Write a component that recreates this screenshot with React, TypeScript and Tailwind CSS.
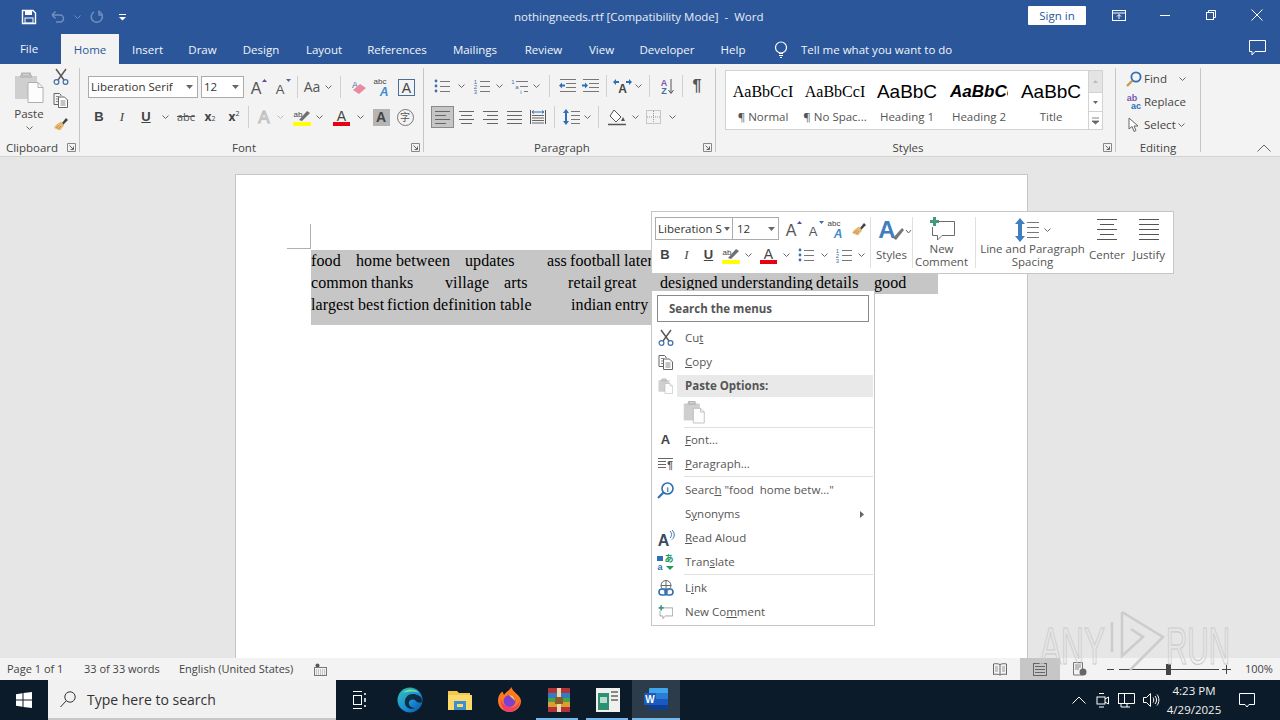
import React from "react";

type P = { children?: React.ReactNode; className?: string };

const S = ({ w, h, children }: { w: number; h: number; children?: React.ReactNode }) => (
  <svg width={w} height={h} viewBox={`0 0 ${w} ${h}`} className="block shrink-0 overflow-visible" fill="none">
    {children}
  </svg>
);

const Cell = ({ children, className = "" }: P) => (
  <div className={"flex items-center justify-center shrink-0 h-[22px] " + className}>{children}</div>
);

const Chev = ({ c = "#666" }: { c?: string }) => (
  <S w={7} h={4}>
    <path d="M0.5 0.5 L3.5 3.5 L6.5 0.5" stroke={c} />
  </S>
);

const Lines = ({ w, h, rows, c = "#666" }: { w: number; h: number; rows: number[][]; c?: string }) => (
  <S w={w} h={h}>
    {rows.map((r, i) => (
      <rect key={i} x={r[0]} y={r[2]} width={r[1] - r[0]} height={1} fill={c} />
    ))}
  </S>
);

const T = ({ x, y, s, c = "#444", b = false, i = false, f = "Liberation Sans", t }: { x: number; y: number; s: number; c?: string; b?: boolean; i?: boolean; f?: string; t: string }) => (
  <text x={x} y={y} fontSize={s} fill={c} fontFamily={f} fontWeight={b ? 700 : 400} fontStyle={i ? "italic" : "normal"} textAnchor="middle">
    {t}
  </text>
);

const Scissors = () => (
  <S w={16} h={16}>
    <path d="M3 0 L11 11 M13 0 L5 11" stroke="#555" strokeWidth="1.4" />
    <circle cx="3.5" cy="13" r="2.4" stroke="#3f6fa8" strokeWidth="1.2" />
    <circle cx="12.5" cy="13" r="2.4" stroke="#3f6fa8" strokeWidth="1.2" />
  </S>
);

const CopyI = () => (
  <S w={16} h={15}>
    <path d="M1 .5 H6.5 L8 2 V3 M1 .5 V11.5 H5" stroke="#666" />
    <path d="M5.5 4 H11.5 L14.5 7 V14.5 H5.5 Z" fill="#fff" stroke="#666" />
    <path d="M3 3.5H6M3 6H5M3 8.5H5M7.5 8H12.5M7.5 10H12.5M7.5 12H12.5" stroke="#888" />
  </S>
);

const Painter = () => (
  <S w={16} h={16}>
    <path d="M9 7 L13 2 L15 4 L10 9 Z" fill="#444" />
    <path d="M3 9 L8 5.5 L11 9.5 L7 14.5 L1 12 Z" fill="#e6b873" />
    <path d="M3 12 L6 9.5M5 13 L8 10" stroke="#c4924a" />
  </S>
);

const PasteI = ({ w = 30, h = 31 }: { w?: number; h?: number }) => (
  <svg width={w} height={h} viewBox="0 0 30 31" className="block shrink-0" fill="none">
    <rect x="1" y="4" width="22" height="23" fill="#cfcfcf" />
    <path d="M8 4 V1.5 H16 V4" stroke="#b5b5b5" strokeWidth="2" />
    <rect x="6" y="3" width="12" height="3" fill="#bcbcbc" />
    <path d="M14 10.5 H24 L29 15.5 V30.5 H14 Z" fill="#fdfdfd" stroke="#b0b0b0" />
    <path d="M24 10.5 V15.5 H29" stroke="#b0b0b0" />
  </svg>
);

const Grow = ({ up = true, big = true }: { up?: boolean; big?: boolean }) => (
  <S w={18} h={18}>
    <T x={7} y={16} s={big ? 16 : 13} c="#555" t="A" />
    {up ? <path d="M13 4 L15.5 1 L18 4 Z" fill="#5a4d9c" /> : <path d="M13 1 L15.5 4 L18 1 Z" fill="#3f6fa8" />}
  </S>
);

const Eraser = () => (
  <S w={17} h={17}>
    <T x={5} y={9} s={9} c="#3f6fa8" t="A" />
    <path d="M3 11 L10 5 L16 9 L9 15 Z" fill="#ea8aa0" />
  </S>
);

const AbcA = () => (
  <S w={18} h={18}>
    <T x={7} y={6} s={8} c="#444" t="abc" />
    <T x={11} y={18} s={12} c="#3f8bd0" b i t="A" />
  </S>
);

const BoxA = () => (
  <S w={17} h={17}>
    <rect x=".5" y=".5" width="16" height="16" stroke="#4a6e96" />
    <T x={8.5} y={14} s={14} c="#444" t="A" />
  </S>
);

const Highlight = () => (
  <S w={18} h={17}>
    <T x={5} y={8} s={8} c="#444" t="ab" />
    <path d="M6 11 L14 2 L17 4 L9 12 Z" fill="#6f6f6f" />
    <rect x="0" y="13" width="18" height="4" rx="1" fill="#ffff00" />
  </S>
);

const FontColor = () => (
  <S w={17} h={17}>
    <T x={8.5} y={12} s={14} c="#444" t="A" />
    <rect x="0" y="13" width="17" height="4" fill="#e60012" />
  </S>
);

const Bullets = () => (
  <S w={16} h={14}>
    <circle cx="2" cy="2" r="1.4" fill="#3f6fa8" />
    <circle cx="2" cy="7" r="1.4" fill="#3f6fa8" />
    <circle cx="2" cy="12" r="1.4" fill="#3f6fa8" />
    <path d="M6 2.5H16M6 7.5H16M6 12.5H16" stroke="#777" />
  </S>
);

const Numbers = () => (
  <S w={17} h={15}>
    <T x={2.5} y={5} s={6} c="#3f6fa8" t="1" />
    <T x={2.5} y={10} s={6} c="#3f6fa8" t="2" />
    <T x={2.5} y={15} s={6} c="#3f6fa8" t="3" />
    <path d="M7 2.5H17M7 7.5H17M7 12.5H17" stroke="#777" />
  </S>
);

const Multi = () => (
  <S w={17} h={15}>
    <T x={2} y={5} s={6} c="#3f6fa8" t="1" />
    <T x={6} y={10} s={6} c="#3f6fa8" t="a" />
    <T x={10} y={15} s={6} c="#3f6fa8" t="i" />
    <path d="M5 2.5H17M9 7.5H17M13 12.5H17" stroke="#777" />
  </S>
);

const Indent = ({ dir }: { dir: "in" | "out" }) => (
  <S w={17} h={14}>
    <path d="M1 .5H17M7 4.5H17M7 8.5H17M1 12.5H17" stroke="#777" />
    {dir === "out" ? <path d="M0 6.5 L3 3.5V5.5H6V7.5H3V9.5Z" fill="#2f6fb5" /> : <path d="M6 6.5 L3 3.5V5.5H0V7.5H3V9.5Z" fill="#2f6fb5" />}
  </S>
);

const AlignLeft = <Lines w={15} h={13} rows={[[0, 15, 0], [0, 11, 4], [0, 15, 8], [0, 11, 12]]} c="#666" />;
const AlignCenter = <Lines w={15} h={13} rows={[[0, 15, 0], [2, 13, 4], [0, 15, 8], [2, 13, 12]]} c="#666" />;
const AlignRight = <Lines w={15} h={13} rows={[[0, 15, 0], [4, 15, 4], [0, 15, 8], [4, 15, 12]]} c="#666" />;
const AlignJustify = <Lines w={15} h={13} rows={[[0, 15, 0], [0, 15, 4], [0, 15, 8], [0, 15, 12]]} c="#666" />;

const LineSpace = () => (
  <S w={17} h={16}>
    <path d="M3 0 L6 4 H4 V12 H6 L3 16 L0 12 H2 V4 H0 Z" fill="#2f6fb5" />
    <path d="M8 2.5H17M8 6.5H17M8 10.5H17M8 14.5H17" stroke="#777" />
  </S>
);

const CommentI = ({ w = 26, h = 25, c = "#6b6b6b" }: { w?: number; h?: number; c?: string }) => (
  <svg width={w} height={h} viewBox="0 0 26 25" className="block shrink-0" fill="none">
    <path d="M9 4.5 H25.5 V18.5 H13 L8.5 23 V18.5 H3.5 V10" stroke={c} />
    <path d="M4 0 H7 V3 H10 V6 H7 V9 H4 V6 H1 V3 H4 Z" fill="#3f9a80" />
  </svg>
);

const MagI = () => (
  <S w={16} h={16}>
    <circle cx="10" cy="6" r="4.6" stroke="#2f6fb5" strokeWidth="1.8" />
    <path d="M6.5 9.5 L1 15" stroke="#c89a4e" strokeWidth="2.4" />
  </S>
);

const GroupBox = ({ w, label, launcher = true, children }: { w: string; label: string; launcher?: boolean; children?: React.ReactNode }) => (
  <div className={"relative flex flex-col h-[84px] mt-1 border-r border-[#c6c6c6] shrink-0 " + w}>
    <div className="h-[72px] shrink-0">{children}</div>
    <div className={"h-[16px] shrink-0 flex items-center justify-center text-[#444] " + (launcher ? "pr-[15px]" : "")}>{label}</div>
    {launcher && (
      <div className="absolute right-[3px] bottom-0">
        <S w={9} h={9}>
          <path d="M.5 8.5V.5H8.5V8.5Z" stroke="#888" />
          <path d="M2.5 2.5L6.5 6.5M3.5 6.5H6.5V3.5" stroke="#666" />
        </S>
      </div>
    )}
  </div>
);

const Sep = ({ h = "h-[22px]" }: { h?: string }) => <div className={"w-px bg-[#d0d0d0] shrink-0 " + h} />;

const Clipboard = () => (
  <div className="flex">
    <div className="w-[50px] flex flex-col items-center pl-[8px] pt-[4px]">
      <PasteI />
      <div className="mt-[3px] leading-[16px]">Paste</div>
      <div className="mt-[4px]">
        <Chev />
      </div>
    </div>
    <div className="w-[22px] flex flex-col items-center pt-px gap-[8px]">
      <Scissors />
      <CopyI />
      <Painter />
    </div>
  </div>
);

const DropBox = ({ text, w, h = "h-[22px]" }: { text: string; w: string; h?: string }) => (
  <div className={"flex items-center justify-between bg-white border border-[#ababab] pl-[2px] pr-[4px] text-[#333] shrink-0 " + w + " " + h}>
    <span className="whitespace-nowrap overflow-hidden">{text}</span>
    <S w={7} h={4}>
      <path d="M0 0H7L3.5 4Z" fill="#666" />
    </S>
  </div>
);

const FontGroup = () => (
  <div className="flex flex-col pl-2 pt-2 gap-2">
    <div className="flex items-center">
      <DropBox text="Liberation Serif" w="w-[110px]" />
      <div className="w-[3px]" />
      <DropBox text="12" w="w-[43px]" />
      <Cell className="w-[24px] ml-[2px]"><Grow /></Cell>
      <Cell className="w-[24px]"><Grow up={false} big={false} /></Cell>
      <Cell className="w-[6px]"><Sep /></Cell>
      <Cell className="w-[20px] ml-[2px] text-[14px] text-[#555]">Aa</Cell>
      <Cell className="w-[12px]"><Chev /></Cell>
      <Cell className="w-[12px]"><Sep /></Cell>
      <Cell className="w-[24px]"><Eraser /></Cell>
      <Cell className="w-[24px]"><AbcA /></Cell>
      <Cell className="w-[24px]"><BoxA /></Cell>
    </div>
    <div className="flex items-center">
      <Cell className="w-[22px] font-bold text-[13px] text-[#444] font-['Liberation_Sans',sans-serif]">B</Cell>
      <Cell className="w-[24px] italic text-[13px] text-[#444] font-['Liberation_Serif',serif]">I</Cell>
      <Cell className="w-[24px] font-bold underline text-[13px] text-[#444] font-['Liberation_Sans',sans-serif]">U</Cell>
      <Cell className="w-[14px]"><Chev /></Cell>
      <Cell className="w-[28px] line-through text-[11px] text-[#555]">abc</Cell>
      <Cell className="w-[20px] font-bold text-[12px] text-[#444]">x<sub className="text-[7px] font-normal">2</sub></Cell>
      <Cell className="w-[28px] font-bold text-[12px] text-[#444]">x<sup className="text-[7px] font-normal">2</sup></Cell>
      <Cell className="w-[1px]"><Sep /></Cell>
      <Cell className="w-[30px]">
        <S w={16} h={16}><text x="8" y="14" fontSize="17" fontFamily="Liberation Sans" textAnchor="middle" fill="#f3f3f3" stroke="#bdbdbd">A</text></S>
      </Cell>
      <Cell className="w-[2px]"><Chev c="#bbb" /></Cell>
      <Cell className="w-[32px] ml-[5px]"><Highlight /></Cell>
      <Cell className="w-[2px]"><Chev /></Cell>
      <Cell className="w-[36px] ml-[3px]"><FontColor /></Cell>
      <Cell className="w-[2px]"><Chev /></Cell>
      <Cell className="w-[36px] ml-[2px]">
        <div className="w-[17px] h-[17px] bg-[#b5b5b5] flex items-center justify-center font-bold text-[14px] text-[#444] font-['Liberation_Sans',sans-serif]">A</div>
      </Cell>
      <Cell className="w-[10px] ml-px">
        <div className="w-[17px] h-[17px] rounded-full border border-[#777] flex items-center justify-center text-[10px] text-[#555] shrink-0 font-['Noto_Sans_CJK_SC',sans-serif]">字</div>
      </Cell>
    </div>
  </div>
);

const ParagraphGroup = () => (
  <div className="flex flex-col pt-[7px] pl-2 gap-[9px]">
    <div className="flex items-center">
      <Cell className="w-[20px]"><Bullets /></Cell>
      <Cell className="w-[19px]"><Chev /></Cell>
      <Cell className="w-[20px]"><Numbers /></Cell>
      <Cell className="w-[17px]"><Chev /></Cell>
      <Cell className="w-[22px]"><Multi /></Cell>
      <Cell className="w-[12px]"><Chev /></Cell>
      <Cell className="w-[14px]"><Sep /></Cell>
      <Cell className="w-[22px]"><Indent dir="out" /></Cell>
      <Cell className="w-[24px]"><Indent dir="in" /></Cell>
      <Cell className="w-[8px]"><Sep /></Cell>
      <Cell className="w-[24px]">
        <S w={19} h={14}>
          <T x={9.5} y={14} s={12} b c="#444" t="A" />
          <path d="M0 3 L3 0 V2 H6 V4 H3 V6 Z M19 3 L16 0 V2 H13 V4 H16 V6 Z" fill="#2f6fb5" />
        </S>
      </Cell>
      <Cell className="w-[8px]"><Chev /></Cell>
      <Cell className="w-[12px] ml-px"><Sep /></Cell>
      <Cell className="w-[24px]">
        <S w={14} h={17}>
          <T x={4} y={8} s={9} b c="#7a5bb0" t="A" />
          <T x={4} y={16} s={9} b c="#3f6fa8" t="Z" />
          <path d="M11 1V15M8.5 12L11 15.5L13.5 12" stroke="#555" />
        </S>
      </Cell>
      <Cell className="w-[6px]"><Sep /></Cell>
      <Cell className="w-[24px] text-[#555] text-[16px] font-bold font-['Liberation_Sans',sans-serif]">¶</Cell>
    </div>
    <div className="flex items-center -ml-[1px]">
      <Cell className="w-[23px] bg-[#c6c6c6] border border-[#8a8a8a]">{AlignLeft}</Cell>
      <Cell className="w-[24px]">{AlignCenter}</Cell>
      <Cell className="w-[24px]">{AlignRight}</Cell>
      <Cell className="w-[24px]">{AlignJustify}</Cell>
      <Cell className="w-[24px]">
        <S w={16} h={16}>
          <path d="M.5 1V15M15.5 1V15" stroke="#555" />
          <path d="M2 3H14M2 3L4 1.5M2 3L4 4.5M14 3L12 1.5M14 3L12 4.5" stroke="#2f6fb5" />
          <path d="M2 6.5H14M2 9H14M2 11.5H14M2 14H14" stroke="#666" />
        </S>
      </Cell>
      <Cell className="w-[9px]"><Sep /></Cell>
      <Cell className="w-[25px]"><LineSpace /></Cell>
      <Cell className="w-[6px]"><Chev /></Cell>
      <Cell className="w-[13px] ml-[2px]"><Sep /></Cell>
      <Cell className="w-[24px]">
        <S w={18} h={17}>
          <path d="M6 1 L13 8 L8 13 L2 7 Z" stroke="#555" fill="#fff" />
          <path d="M15 8 L17 12 L13 12 Z" fill="#555" />
          <path d="M0 15.5H18" stroke="#555" strokeWidth="1.5" />
        </S>
      </Cell>
      <Cell className="w-[12px]"><Chev /></Cell>
      <Cell className="w-[25px]">
        <S w={15} h={14}>
          <rect x=".5" y=".5" width="14" height="13" stroke="#999" strokeDasharray="1 1" />
          <path d="M7.5 1V13M1 7H14" stroke="#999" strokeDasharray="1 1" />
        </S>
      </Cell>
      <Cell className="w-[12px]"><Chev /></Cell>
    </div>
  </div>
);

const StyleItem = ({ sample, label, cls }: { sample: string; label: string; cls: string }) => (
  <div className="w-[72px] flex flex-col items-center shrink-0 overflow-hidden">
    <div className={"h-[35px] pt-[3px] flex items-center whitespace-nowrap overflow-hidden text-black " + cls}>{sample}</div>
    <div className="text-[#555] leading-[18px] whitespace-nowrap">{label}</div>
  </div>
);

const StylesGroup = () => (
  <div className="pl-[9px] pt-[2px]">
    <div className="flex w-[378px] h-[60px] bg-white border border-[#d2d2d2]">
      <div className="flex flex-1 pl-px pt-[2px]">
        <StyleItem sample="AaBbCcI" label="¶ Normal" cls="w-[66px] justify-center text-[16px] font-['Liberation_Serif',serif]" />
        <StyleItem sample="AaBbCcI" label="¶ No Spac..." cls="w-[66px] justify-center text-[16px] font-['Liberation_Serif',serif]" />
        <StyleItem sample="AaBbC" label="Heading 1" cls="w-[66px] justify-center text-[19px] font-['Liberation_Sans',sans-serif]" />
        <StyleItem sample="AaBbCc" label="Heading 2" cls="w-[58px] justify-start text-[17px] italic font-bold font-['Liberation_Sans',sans-serif]" />
        <StyleItem sample="AaBbC" label="Title" cls="w-[66px] justify-center text-[19px] font-['Liberation_Sans',sans-serif]" />
      </div>
      <div className="w-[14px] flex flex-col border-l border-[#d2d2d2]">
        <div className="h-[21px] bg-[#e4e4e4] flex items-center justify-center">
          <S w={5} h={3}><path d="M0 3L2.5 0L5 3Z" fill="#bbb" /></S>
        </div>
        <div className="h-[20px] border-y border-[#d2d2d2] flex items-center justify-center">
          <S w={5} h={3}><path d="M0 0L2.5 3L5 0Z" fill="#666" /></S>
        </div>
        <div className="flex-1 flex items-center justify-center">
          <S w={7} h={6}><path d="M0 0H7M0 3H7L3.5 6Z" stroke="#666" fill="#666" strokeWidth=".8" /></S>
        </div>
      </div>
    </div>
  </div>
);

const EditingGroup = () => (
  <div className="flex flex-col pl-[8px] gap-[1px]">
    <div className="flex items-center h-[22px]">
      <div className="w-[20px] flex justify-center"><MagI /></div>
      <span>Find</span>
      <div className="ml-[12px]"><Chev /></div>
    </div>
    <div className="flex items-center h-[22px]">
      <div className="w-[20px] flex justify-center">
        <S w={17} h={16}>
          <T x={6} y={7} s={9} b c="#7a5bb0" t="ab" />
          <T x={10} y={15} s={9} b c="#2f6fb5" t="ac" />
        </S>
      </div>
      <span>Replace</span>
    </div>
    <div className="flex items-center h-[22px]">
      <div className="w-[20px] flex justify-center">
        <S w={12} h={16}><path d="M1 1V12L4 9.5L6 14.5L8 13.5L6 9H10Z" fill="#fff" stroke="#666" /></S>
      </div>
      <span>Select</span>
      <div className="ml-[2px]"><Chev /></div>
    </div>
  </div>
);

const Ribbon = () => (
  <div className="flex h-[93px] bg-[#f3f3f3] border-b border-[#d2d2d2] shrink-0">
    <GroupBox w="w-[80px]" label="Clipboard"><Clipboard /></GroupBox>
    <GroupBox w="w-[344px]" label="Font"><FontGroup /></GroupBox>
    <GroupBox w="w-[292px]" label="Paragraph"><ParagraphGroup /></GroupBox>
    <GroupBox w="w-[400px]" label="Styles"><StylesGroup /></GroupBox>
    <GroupBox w="w-[85px]" label="Editing" launcher={false}><EditingGroup /></GroupBox>
    <div className="flex-1 flex items-end justify-end pr-[9px] pb-[4px]">
      <S w={14} h={8}><path d="M.5 7.5L7 1L13.5 7.5" stroke="#666" /></S>
    </div>
  </div>
);

const tabs: [string, string][] = [
  ["Insert", "w-[57px]"],
  ["Draw", "w-[53px]"],
  ["Design", "w-[64px]"],
  ["Layout", "w-[62px]"],
  ["References", "w-[84px]"],
  ["Mailings", "w-[72px]"],
  ["Review", "w-[65px]"],
  ["View", "w-[51px]"],
  ["Developer", "w-[80px]"],
  ["Help", "w-[52px]"],
];

const TitleBar = () => (
  <div className="flex items-center h-[34px] text-white shrink-0">
    <div className="w-[514px] flex items-center">
      <div className="ml-[22px]">
        <S w={14} h={14}>
          <path d="M.5 .5H11L13.5 3V13.5H.5Z" stroke="#fff" strokeWidth="1.4" />
          <rect x="3" y="1" width="7" height="4" fill="#fff" />
          <rect x="3" y="8" width="8" height="5" stroke="#fff" />
        </S>
      </div>
      <div className="ml-[15px] w-[14px]">
        <S w={14} h={12}>
          <path d="M1 4H9A3.5 3.5 0 0 1 9 11H5M1 4L4.5 .5M1 4L4.5 7.5" stroke="#6f8fbf" strokeWidth="1.5" />
        </S>
      </div>
      <div className="ml-[9px]"><Chev c="#6f8fbf" /></div>
      <div className="ml-[9px]">
        <S w={14} h={14}>
          <path d="M9 1.5A5.6 5.6 0 1 1 4 1.8" stroke="#6f8fbf" strokeWidth="1.5" />
          <path d="M9 .5V5H13" stroke="#6f8fbf" strokeWidth="1.5" />
        </S>
      </div>
      <div className="ml-[15px]">
        <S w={7} h={7}>
          <path d="M0 .5H7" stroke="#fff" />
          <path d="M0 3H7L3.5 6.5Z" fill="#fff" />
        </S>
      </div>
    </div>
    <div className="w-[252px] whitespace-pre text-[#e8edf5]">{"nothingneeds.rtf [Compatibility Mode]  -  Word"}</div>
    <div className="ml-[262px] w-[58px] h-[19px] bg-white rounded-[1px] text-[#2b579a] flex items-center justify-center -mt-[3px] pt-px">Sign in</div>
    <div className="ml-[26px] -mt-[4px]">
      <S w={14} h={11}>
        <rect x=".5" y=".5" width="13" height="10" stroke="#fff" />
        <path d="M1 3H13" stroke="#fff" />
        <path d="M7 9V4.5M5 6.5L7 4.5L9 6.5" stroke="#fff" />
      </S>
    </div>
    <div className="ml-[34px] -mt-[4px]"><S w={10} h={1}><rect width="10" height="1" fill="#fff" /></S></div>
    <div className="ml-[36px] -mt-[4px]">
      <S w={10} h={10}>
        <rect x=".5" y="2.5" width="7" height="7" stroke="#fff" />
        <path d="M2.5 2.5V.5H9.5V7.5H7.5" stroke="#fff" />
      </S>
    </div>
    <div className="ml-[35px] -mt-[4px]">
      <S w={12} h={12}><path d="M.5 .5L11.5 11.5M11.5 .5L.5 11.5" stroke="#fff" /></S>
    </div>
  </div>
);

const TabBar = () => (
  <div className="flex items-end h-[30px] text-[#f2f5fa] shrink-0">
    <div className="w-[58px] h-[30px] flex items-center justify-center">File</div>
    <div className="w-[58px] ml-[3px] h-[30px] bg-[#f3f3f3] text-[#2b579a] flex items-center justify-center pt-[2px]">Home</div>
    {tabs.map(([t, w]) => (
      <div key={t} className={"h-[30px] flex items-center justify-center pt-[2px] " + w}>{t}</div>
    ))}
    <div className="ml-[15px] h-[30px] flex items-center">
      <S w={14} h={17}>
        <circle cx="7" cy="6.5" r="5.5" stroke="#fff" strokeWidth="1.2" />
        <path d="M5 12.5H9M5 14.5H9M6 16.5H8" stroke="#fff" />
      </S>
    </div>
    <div className="ml-[13px] h-[30px] flex items-center whitespace-nowrap pt-[1px]">Tell me what you want to do</div>
    <div className="ml-auto mr-[14px] h-[30px] flex items-center pb-[2px]">
      <S w={17} h={16}>
        <path d="M.5 .5H16.5V11.5H6L3 15V11.5H.5Z" stroke="#fff" />
      </S>
    </div>
  </div>
);

const Word = ({ t, w }: { t: string; w: string }) => <span className={"shrink-0 whitespace-nowrap " + w}>{t}</span>;

const Doc = () => (
  <div className="flex-1 min-h-0 bg-[#e6e6e6] pt-[17px] pl-[235px] overflow-hidden">
    <div className="w-[793px] h-[600px] bg-white border border-[#c6c6c6] pl-[51px] pt-[49px]">
      <div className="w-[24px] h-[25px] border-r border-b border-[#b0b0b0]" />
      <div className="ml-[24px] mt-px font-['Liberation_Serif',serif] text-[16px] leading-[22px] tracking-[0.1px] text-black">
        <div className="flex w-[627px] h-[22px] bg-[#c6c6c6]">
          <Word t="food" w="w-[45px]" />
          <Word t="home" w="w-[40px]" />
          <Word t="between" w="w-[69px]" />
          <Word t="updates" w="w-[82px]" />
          <Word t="ass" w="w-[23px]" />
          <Word t="football" w="w-[54px]" />
          <Word t="later" w="w-[40px]" />
        </div>
        <div className="flex w-[627px] h-[22px] bg-[#c6c6c6]">
          <Word t="common" w="w-[60px]" />
          <Word t="thanks" w="w-[74px]" />
          <Word t="village" w="w-[59px]" />
          <Word t="arts" w="w-[64px]" />
          <Word t="retail" w="w-[36px]" />
          <Word t="great" w="w-[56px]" />
          <Word t="designed" w="w-[61px]" />
          <Word t="understanding" w="w-[95px]" />
          <Word t="details" w="w-[58px]" />
          <Word t="good" w="w-[34px]" />
        </div>
        <div className="flex w-[560px] h-[31px] bg-[#c6c6c6]">
          <Word t="largest" w="w-[47px]" />
          <Word t="best" w="w-[29px]" />
          <Word t="fiction" w="w-[46px]" />
          <Word t="definition" w="w-[67px]" />
          <Word t="table" w="w-[71px]" />
          <Word t="indian" w="w-[44px]" />
          <Word t="entry" w="w-[36px]" />
        </div>
      </div>
    </div>
  </div>
);

const MiniToolbar = () => (
  <div className="absolute left-[651px] top-[211px] w-[523px] h-[63px] bg-white border border-[#c6c6c6] flex text-[#555]">
    <div className="w-[218px] shrink-0 pl-[3px] pt-[5px]">
      <div className="flex items-center">
        <div className="flex items-center justify-between w-[78px] h-[23px] border border-[#ababab] pl-[2px] pr-[2px] text-[#333] overflow-hidden shrink-0">
          <span className="whitespace-nowrap overflow-hidden w-[66px]">Liberation S</span>
          <S w={6} h={4}><path d="M0 0H6L3 4Z" fill="#666" /></S>
        </div>
        <div className="flex items-center justify-between w-[46px] h-[23px] border border-l-0 border-[#ababab] pl-[4px] pr-[3px] text-[#333] shrink-0">
          <span>12</span>
          <S w={7} h={4}><path d="M0 0H7L3.5 4Z" fill="#666" /></S>
        </div>
        <Cell className="w-[23px] ml-[2px]"><Grow /></Cell>
        <Cell className="w-[22px]"><Grow up={false} big={false} /></Cell>
        <Cell className="w-[20px]"><AbcA /></Cell>
        <Cell className="w-[25px]"><Painter /></Cell>
      </div>
      <div className="flex items-center mt-[4px]">
        <Cell className="w-[20px] font-bold text-[13px] text-[#444] font-['Liberation_Sans',sans-serif]">B</Cell>
        <Cell className="w-[23px] italic text-[13px] text-[#444] font-['Liberation_Serif',serif]">I</Cell>
        <Cell className="w-[21px] font-bold underline text-[13px] text-[#444] font-['Liberation_Sans',sans-serif]">U</Cell>
        <Cell className="w-[24px]"><Highlight /></Cell>
        <Cell className="w-[10px]"><Chev /></Cell>
        <Cell className="w-[30px]"><FontColor /></Cell>
        <Cell className="w-[6px]"><Chev /></Cell>
        <Cell className="w-[32px] ml-px"><Bullets /></Cell>
        <Cell className="w-[4px]"><Chev /></Cell>
        <Cell className="w-[34px]"><Numbers /></Cell>
        <Cell className="w-[2px]"><Chev /></Cell>
      </div>
    </div>
    <div className="w-[42px] shrink-0 border-l border-[#e0e0e0] my-[5px] flex flex-col items-center">
      <div className="h-[25px] flex items-center ml-[3px]">
        <S w={32} h={24}>
          <text x="10" y="20" fontSize="24" fontWeight="700" fontFamily="Liberation Sans" textAnchor="middle" fill="#3f7fbf">A</text>
          <path d="M16 20 L25 10 L27 12 L19 22 Z" fill="#777" />
          <path d="M29 12 L31.5 15 L34 12" stroke="#666" />
        </S>
      </div>
      <div className="mt-[5px] leading-[16px]">Styles</div>
    </div>
    <div className="w-[63px] shrink-0 border-l border-[#e0e0e0] my-[5px] pr-[5px] flex flex-col items-center">
      <div className="h-[25px] flex items-center"><CommentI /></div>
      <div className="leading-[13px] text-center">New<br />Comment</div>
    </div>
    <div className="w-[114px] shrink-0 border-l border-[#e0e0e0] my-[5px] flex flex-col items-center">
      <div className="h-[25px] flex items-center gap-[2px]">
        <S w={28} h={24}>
          <path d="M6 0 L11 6 H8 V18 H11 L6 24 L1 18 H4 V6 H1 Z" fill="#3f7fbf" />
          <path d="M13 4.5H25M13 9.5H25M13 14.5H25M13 19.5H25" stroke="#777" />
        </S>
        <Chev />
      </div>
      <div className="leading-[13px] text-center whitespace-nowrap">Line and Paragraph<br />Spacing</div>
    </div>
    <div className="w-[42px] shrink-0 my-[5px] -ml-[3px] flex flex-col items-center">
      <div className="h-[25px] flex items-center">
        <Lines w={20} h={21} rows={[[0, 20, 0], [3, 17, 5], [0, 20, 10], [3, 17, 15], [0, 20, 20]]} c="#555" />
      </div>
      <div className="mt-[5px] leading-[16px]">Center</div>
    </div>
    <div className="w-[42px] shrink-0 my-[5px] flex flex-col items-center">
      <div className="h-[25px] flex items-center">
        <Lines w={20} h={21} rows={[[0, 20, 0], [0, 20, 5], [0, 20, 10], [0, 20, 15], [0, 20, 20]]} c="#555" />
      </div>
      <div className="mt-[5px] leading-[16px]">Justify</div>
    </div>
  </div>
);

const MenuRow = ({ icon, children, right, h = "h-[24px]" }: { icon?: React.ReactNode; children?: React.ReactNode; right?: React.ReactNode; h?: string }) => (
  <div className={"flex items-center text-[#555] " + h}>
    <div className="w-[26px] mr-[7px] flex justify-center shrink-0 pl-px">{icon}</div>
    <div className="whitespace-pre flex-1">{children}</div>
    {right}
  </div>
);

const MenuSep = () => <div className="h-px bg-[#e0e0e0] ml-[32px] mr-px" />;

const ContextMenu = () => (
  <div className="absolute left-[651px] top-[290px] w-[224px] h-[336px] bg-white border border-[#c6c6c6] pt-[4px]">
    <div className="mx-[5px] h-[27px] border border-[#8a8a8a] flex items-center pl-[11px] font-bold text-[#555]">Search the menus</div>
    <div className="mt-[4px]">
      <MenuRow icon={<Scissors />}>Cu<u>t</u></MenuRow>
      <MenuRow icon={<CopyI />}><u>C</u>opy</MenuRow>
      <div className="flex items-center h-[22px] mt-px">
        <div className="w-[25px] flex justify-center shrink-0 pl-px"><PasteI w={15} h={16} /></div>
        <div className="flex-1 h-[22px] bg-[#e9e9e9] flex items-center pl-[8px] font-bold text-[#555] mr-px">Paste Options:</div>
      </div>
      <div className="h-[30px] flex items-center pl-[31px]"><PasteI w={22} h={24} /></div>
      <MenuSep />
      <MenuRow icon={<span className="font-bold text-[13px] text-[#444] font-['Liberation_Sans',sans-serif]">A</span>}><u>F</u>ont...</MenuRow>
      <MenuRow icon={
        <S w={15} h={12}>
          <path d="M0 .5H15M0 3.5H8M0 6.5H8M0 9.5H8" stroke="#666" />
          <T x={12} y={11} s={10} b c="#555" t="¶" />
        </S>
      }><u>P</u>aragraph...</MenuRow>
      <MenuSep />
      <div className="h-px" />
      <MenuRow icon={
        <S w={17} h={17}>
          <circle cx="10.5" cy="6.5" r="5.5" stroke="#2f6fb5" strokeWidth="1.6" />
          <T x={10.5} y={10} s={8} b c="#2f6fb5" t="i" />
          <path d="M6.5 10.5L1 16" stroke="#2f6fb5" strokeWidth="2.2" />
        </S>
      }>Searc<u>h</u> "food  home betw..."</MenuRow>
      <MenuRow right={<div className="mr-[10px]"><S w={4} h={7}><path d="M0 0L4 3.5L0 7Z" fill="#666" /></S></div>}>S<u>y</u>nonyms</MenuRow>
      <MenuRow icon={
        <S w={18} h={17}>
          <T x={6.5} y={16} s={16} b c="#3b4a5a" t="A" />
          <path d="M13 1C15 3 15 6 13 8M15 0C18 3 18 7 15 9.5" stroke="#2f6fb5" />
        </S>
      }><u>R</u>ead Aloud</MenuRow>
      <MenuRow icon={
        <S w={17} h={16}>
          <path d="M0 2H6V7H0Z" fill="#2f6fb5" />
          <T x={3} y={16} s={9} b c="#2f6fb5" t="a" />
          <text x="12" y="8" fontSize="9" fontWeight="700" fill="#1f9a6a" textAnchor="middle" fontFamily="Noto Sans CJK JP">あ</text>
          <path d="M9 12H17L13 16Z" fill="#1f9a6a" />
        </S>
      }>Tran<u>s</u>late</MenuRow>
      <MenuSep />
      <div className="h-px" />
      <MenuRow icon={
        <S w={16} h={17}>
          <circle cx="8" cy="5.5" r="5" stroke="#666" />
          <path d="M3 5.5H13M8 .5V10" stroke="#666" />
          <rect x="1" y="9" width="8" height="6" rx="3" stroke="#2f6fb5" strokeWidth="1.6" />
          <rect x="7" y="9" width="8" height="6" rx="3" stroke="#2f6fb5" strokeWidth="1.6" />
        </S>
      }>L<u>i</u>nk</MenuRow>
      <MenuRow icon={<CommentI w={15} h={15} />}>New Co<u>m</u>ment</MenuRow>
    </div>
  </div>
);

const Watermark = () => (
  <div className="absolute left-[1040px] top-[610px] flex items-start text-[51px] leading-[60px] text-transparent [-webkit-text-stroke:1.2px_#cccccc] font-['Liberation_Sans',sans-serif] pointer-events-none">
    <span className="block w-[70px] mt-[7px] origin-left scale-x-[0.62]">ANY</span>
    <svg width="56" height="64" viewBox="0 0 56 64" className="block shrink-0" fill="none">
      <path d="M2 12 V42 M12 2 L53 27 L20 60 M12 2 V46 L33 27 L21 19" stroke="#cccccc" strokeWidth="2.5" />
    </svg>
    <span className="block w-[64px] mt-[7px] origin-left scale-x-[0.58]">RUN</span>
  </div>
);

const StatusBar = () => (
  <div className="flex items-center h-[22px] bg-[#f3f3f3] text-[11px] text-[#444] shrink-0 relative">
    <span className="ml-[7px]">Page 1 of 1</span>
    <span className="absolute left-[84px]">33 of 33 words</span>
    <span className="absolute left-[179px]">English (United States)</span>
    <div className="absolute left-[314px]">
      <S w={13} h={13}>
        <circle cx="3.5" cy="2.5" r="2" fill="#555" />
        <rect x=".5" y="4.5" width="12" height="8" stroke="#777" />
        <path d="M2 7H11M2 9H11M2 11H11" stroke="#999" strokeDasharray="1 1" />
      </S>
    </div>
    <div className="ml-auto flex items-center h-[22px] w-[300px] shrink-0">
      <div className="w-[40px] flex justify-center">
        <S w={14} h={12}>
          <path d="M7 1.5C5 .5 2 .5 .5 1V11.5C2 11 5 11 7 12C9 11 12 11 13.5 11.5V1C12 .5 9 .5 7 1.5ZM7 1.5V12" stroke="#666" />
          <path d="M2 4H5M2 6H5M2 8H5M9 4H12M9 6H12M9 8H12" stroke="#999" />
        </S>
      </div>
      <div className="w-[40px] h-[22px] bg-[#c6c6c6] flex items-center justify-center">
        <S w={14} h={13}>
          <rect x=".5" y=".5" width="13" height="12" stroke="#666" />
          <path d="M2 3.5H12M2 6.5H12M2 9.5H12" stroke="#666" />
        </S>
      </div>
      <div className="w-[40px] flex justify-center">
        <S w={14} h={14}>
          <path d="M.5 .5H9.5V13H.5Z" stroke="#777" />
          <path d="M2 3H8M2 5H8M2 7H6" stroke="#888" />
          <circle cx="10" cy="10" r="3.5" fill="#666" />
        </S>
      </div>
      <div className="ml-[7px] w-[7px] h-px bg-[#444] shrink-0" />
      <div className="relative ml-[5px] w-[100px] h-px bg-[#444] shrink-0">
        <div className="absolute left-[47px] -top-[5px] w-[5px] h-[11px] bg-[#444]" />
      </div>
      <div className="ml-[3px]">
        <S w={9} h={9}><path d="M4.5 0V9M0 4.5H9" stroke="#444" /></S>
      </div>
      <span className="ml-[14px]">100%</span>
    </div>
  </div>
);

const Taskbar = () => (
  <div className="flex h-[40px] bg-[#0b1b29] text-white shrink-0">
    <div className="w-[48px] flex items-center justify-center">
      <S w={16} h={16}>
        <path d="M0 2.2L6.5 1.3V7.5H0ZM7.5 1.1L16 0V7.5H7.5ZM0 8.5H6.5V14.7L0 13.8ZM7.5 8.5H16V16L7.5 14.9Z" fill="#fff" />
      </S>
    </div>
    <div className="w-[288px] h-[40px] bg-[#f1f1f1] border-b-2 border-[#c8c8c8] flex items-center pl-[12px] text-[#333] text-[14px] font-['Open_Sans',sans-serif]">
      <S w={16} h={17}>
        <circle cx="10" cy="6" r="5.2" stroke="#333" />
        <path d="M6.2 9.8L.5 16" stroke="#333" />
      </S>
      <span className="ml-[11px] mt-[2px]">Type here to search</span>
    </div>
    <div className="ml-[12px] w-[24px] flex items-center justify-center">
      <S w={16} h={18}>
        <path d="M1 .5H10M1 17.5H10" stroke="#fff" />
        <rect x="1.5" y="4.5" width="8" height="9" stroke="#fff" />
        <path d="M13 2V4M13 7V11M13 14V16" stroke="#fff" strokeWidth="1.5" />
      </S>
    </div>
    <div className="ml-[14px] w-[48px] flex items-center justify-center">
      <svg width="26" height="26" viewBox="0 0 26 26" className="block">
        <defs>
          <linearGradient id="edg" x1="0" y1="0" x2="1" y2="1">
            <stop offset="0" stopColor="#35c1b0" />
            <stop offset=".55" stopColor="#1a8fd8" />
            <stop offset="1" stopColor="#0c4f9e" />
          </linearGradient>
        </defs>
        <circle cx="13" cy="13" r="12.5" fill="url(#edg)" />
        <path d="M25 14C25 9 20 7 16 7C10 7 7 12 8 17C9 21 14 23 18 21C14 21 11 18 12 15C13 12 17 12 19 14C20 15.5 25 17 25 14Z" fill="#0b1b29" opacity=".85" />
        <path d="M6 6C9 2 17 1 22 6C19 4 11 4 6 6Z" fill="#7be08a" />
      </svg>
    </div>
    <div className="ml-[1px] w-[49px] flex items-center justify-center">
      <S w={24} h={22}>
        <path d="M0 2H9L11 4H22V21H0Z" fill="#f4c74f" />
        <rect x="0" y="6" width="24" height="15" fill="#fbd96b" />
        <rect x="6" y="12" width="12" height="9" fill="#3d8fd1" />
        <rect x="9" y="15" width="6" height="3" fill="#fbd96b" />
      </S>
    </div>
    <div className="w-[50px] flex items-center justify-center">
      <svg width="25" height="26" viewBox="0 0 25 26" className="block">
        <path d="M12.5 25C6 25 1 20 1 13.5C1 9.5 3 6 5.5 4.5L7 8C9 5 13 3 14.5 0C15 5 24 8 24 14C24 20 19 25 12.5 25Z" fill="#ff7a1f" />
        <path d="M4 12C6 22 20 24 23 13C23 19 18 25 12.5 25C7 25 3 19 4 12Z" fill="#ef3f6b" />
        <circle cx="12.5" cy="14" r="6" fill="#7f3fd1" />
        <path d="M12 8C16 8 18 11 18 14C16 11 14 11 12 8Z" fill="#ffce3a" />
      </svg>
    </div>
    <div className="relative w-[49px] flex items-center justify-center after:absolute after:left-[2px] after:right-[5px] after:bottom-0 after:h-[2px] after:bg-[#76b9ed]">
      <S w={24} h={24}>
        <rect x="1" width="22" height="24" fill="#b5313a" />
        <rect x="1" y="5" width="22" height="5" fill="#2e7fc2" />
        <rect x="1" y="10" width="22" height="4" fill="#4aa14a" />
        <rect x="1" y="14" width="22" height="5" fill="#d8a12f" />
        <rect x="10" y="0" width="4" height="24" fill="#e8d9b0" />
        <rect x="8" y="9" width="8" height="7" fill="#8b5a2b" />
      </S>
    </div>
    <div className="relative w-[49px] flex items-center justify-center after:absolute after:left-[3px] after:right-[4px] after:bottom-0 after:h-[2px] after:bg-[#76b9ed]">
      <S w={24} h={24}>
        <rect width="24" height="24" fill="#f0f0ee" />
        <rect x="2" y="5" width="11" height="17" fill="#2f8f73" />
        <rect x="4" y="9" width="7" height="6" fill="#b8dccf" />
        <path d="M15 4H22M15 8H22M15 12H22" stroke="#666" strokeWidth="1.5" />
      </S>
    </div>
    <div className="relative w-[48px] bg-[#2c3c4b] flex items-center justify-center border-b-2 border-[#76b9ed]">
      <S w={24} h={22}>
        <rect x="5" width="19" height="22" rx="1" fill="#41a5ee" />
        <rect x="5" y="5" width="19" height="6" fill="#2b7cd3" />
        <rect x="5" y="11" width="19" height="6" fill="#185abd" />
        <rect x="5" y="17" width="19" height="5" fill="#103f91" />
        <rect x="0" y="5" width="12" height="12" rx="1" fill="#185abd" />
        <text x="6" y="15" fontSize="10" fontWeight="700" fill="#fff" textAnchor="middle" fontFamily="Liberation Sans">W</text>
      </S>
    </div>
    <div className="ml-auto flex items-center h-[40px]">
      <S w={14} h={8}><path d="M.5 7.5L7 1L13.5 7.5" stroke="#fff" /></S>
      <div className="ml-[10px]">
        <S w={13} h={16}>
          <rect x="1" y="5" width="8" height="7" stroke="#fff" />
          <path d="M9 7L12.5 5V12L9 10" stroke="#fff" />
          <path d="M3 1.5H8M3 15H8" stroke="#fff" />
        </S>
      </div>
      <div className="ml-[9px]">
        <S w={17} h={15}>
          <path d="M4 .5H16.5V10.5H4" stroke="#fff" />
          <rect x=".5" y=".5" width="6" height="10" stroke="#fff" fill="#0b1b29" />
          <path d="M3 10.5V14H12M9 11V14" stroke="#fff" />
        </S>
      </div>
      <div className="ml-[8px]">
        <S w={16} h={14}>
          <path d="M.5 4.5H3.5L7.5 .5V13.5L3.5 9.5H.5Z" stroke="#fff" />
          <path d="M10 4.5C11 6 11 8 10 9.5M12 3C14 5.5 14 8.5 12 11M14 1.5C16.5 4.5 16.5 9.5 14 12.5" stroke="#fff" />
        </S>
      </div>
      <div className="w-[70px] text-center text-[11.5px] leading-[19px] text-[#f0f0f0]">
        4:23 PM<br />4/29/2025
      </div>
      <div className="ml-[10px] mr-[25px]">
        <S w={16} h={15}>
          <path d="M.5 .5H15.5V11.5H10L8 14L6 11.5H.5Z" stroke="#fff" />
        </S>
      </div>
    </div>
  </div>
);

export default function App() {
  return (
    <div className="relative w-[1280px] h-[720px] overflow-hidden flex flex-col bg-[#2b579a] text-[11.5px] leading-[16px] text-[#444] font-['Open_Sans',sans-serif]">
      <TitleBar />
      <TabBar />
      <Ribbon />
      <Doc />
      <StatusBar />
      <Taskbar />
      <MiniToolbar />
      <ContextMenu />
      <Watermark />
    </div>
  );
}
